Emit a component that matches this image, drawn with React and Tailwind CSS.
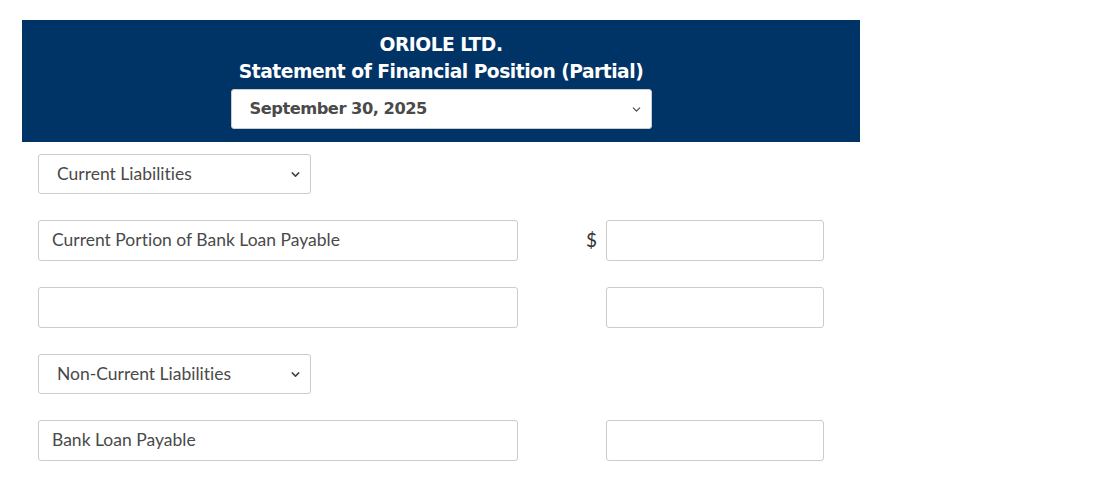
import { ChevronDown } from 'lucide-react'

const headFont = { fontFamily: '"DejaVu Sans", Verdana, sans-serif' }

function Dropdown({ value, className = '', bold = false }) {
  return (
    <div
      className={`flex items-center justify-between bg-white border border-[#cccccc] rounded-[3px] pl-[18px] pr-[8px] ${className}`}
    >
      <span
        className={bold ? 'text-[16.3px] font-bold text-[#4a4a4a] tracking-[-0.5px]' : 'text-[17.5px] text-[#4a4a4a]'}
        style={bold ? headFont : undefined}
      >
        {value}
      </span>
      <ChevronDown size={13} strokeWidth={bold ? 2 : 2.75} className="text-[#444444]" />
    </div>
  )
}

function Field({ value = '', className = '' }) {
  return (
    <div
      className={`flex items-center bg-white border border-[#cccccc] rounded-[3px] px-[13px] text-[17.5px] text-[#4a4a4a] ${className}`}
    >
      {value}
    </div>
  )
}

function Row({ label, dollar = false }) {
  return (
    <div className="flex items-center">
      <Field value={label} className="w-[480px] h-[41px]" />
      <div className="w-[88px] flex justify-end pr-[9px] text-[19px] text-[#333333]">
        {dollar ? '$' : ''}
      </div>
      <Field className="w-[218px] h-[41px]" />
    </div>
  )
}

export default function App() {
  return (
    <div
      className="min-h-screen bg-white pt-[20px] px-[22px] [font-variant-ligatures:none]"
      style={{ fontFamily: 'Lato, "Open Sans", sans-serif' }}
    >
      <div className="w-[838px] h-[122px] bg-[#003366] flex flex-col items-center pt-[11px]" style={headFont}>
        <div className="text-white font-bold text-[18.7px] leading-[27px] tracking-[-0.5px]">ORIOLE LTD.</div>
        <div className="text-white font-bold text-[18.7px] leading-[28px] tracking-[-0.5px]">
          Statement of Financial Position (Partial)
        </div>
        <Dropdown
          value="September 30, 2025"
          bold
          className="w-[421px] h-[40px] mt-[3px]"
        />
      </div>

      <div className="pl-[16px] pt-[12px] flex flex-col gap-[26px]">
        <Dropdown value="Current Liabilities" className="w-[273px] h-[40px]" />
        <Row label="Current Portion of Bank Loan Payable" dollar />
        <Row label="" />
        <Dropdown value="Non-Current Liabilities" className="w-[273px] h-[40px]" />
        <Row label="Bank Loan Payable" />
      </div>
    </div>
  )
}
